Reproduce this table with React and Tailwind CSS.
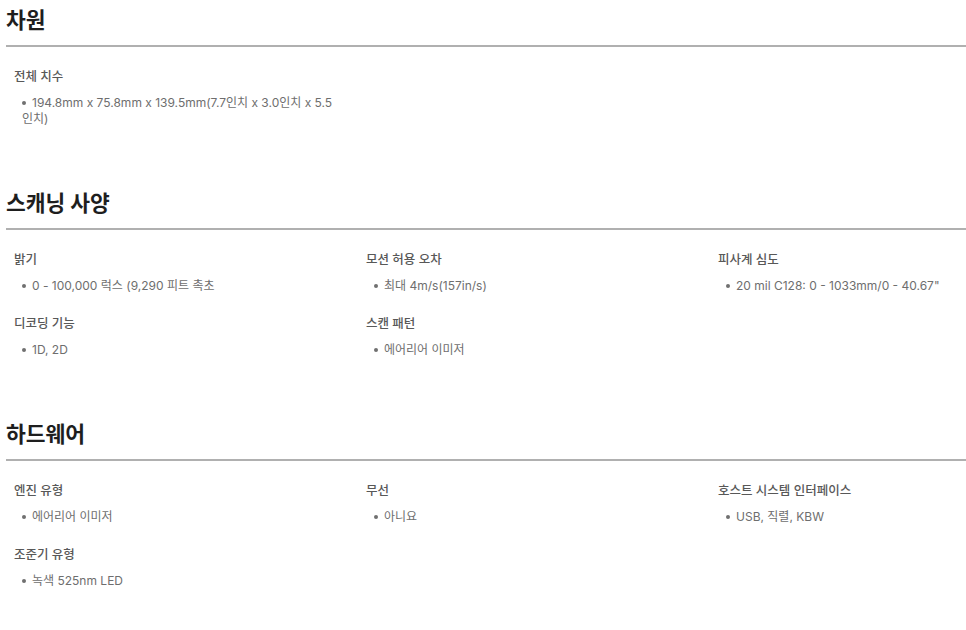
const sections = [
  {
    title: "차원",
    items: [
      { label: "전체 치수", value: "194.8mm x 75.8mm x 139.5mm(7.7인치 x 3.0인치 x 5.5 인치)" },
    ],
  },
  {
    title: "스캐닝 사양",
    items: [
      { label: "밝기", value: "0 - 100,000 럭스 (9,290 피트 촉초" },
      { label: "모션 허용 오차", value: "최대 4m/s(157in/s)" },
      { label: "피사계 심도", value: "20 mil C128: 0 - 1033mm/0 - 40.67\"" },
      { label: "디코딩 기능", value: "1D, 2D" },
      { label: "스캔 패턴", value: "에어리어 이미저" },
    ],
  },
  {
    title: "하드웨어",
    items: [
      { label: "엔진 유형", value: "에어리어 이미저" },
      { label: "무선", value: "아니요" },
      { label: "호스트 시스템 인터페이스", value: "USB, 직렬, KBW" },
      { label: "조준기 유형", value: "녹색 525nm LED" },
    ],
  },
];

function SpecItem({ label, value }) {
  return (
    <div className="pr-[12px]">
      <h4 className="text-[12.5px] leading-5 font-medium text-[#585858]">{label}</h4>
      <ul className="mt-2 pl-2 text-[12px] leading-4 text-[#6e6e6e] break-keep">
        <li>
          <span className="inline-block w-[4px] h-[4px] rounded-full bg-[#707070] mr-[6px] align-middle relative -top-px" />
          {value}
        </li>
      </ul>
    </div>
  );
}

export default function App() {
  return (
    <div
      className="min-h-screen bg-white pl-[6px] pt-[5px] overflow-hidden"
      style={{ fontFamily: 'Inter, "Noto Sans CJK KR", sans-serif' }}
    >
      {sections.map((s) => (
        <section key={s.title} className="mb-[61px]">
          <h2
            className="text-[21.5px] leading-7 font-bold text-[#1e1e1e]"
            style={{ fontFamily: '"Noto Sans CJK KR", sans-serif' }}
          >
            {s.title}
          </h2>
          <div className="mt-3 border-t-2 border-[#b0b0b0]" />
          <div className="grid grid-cols-[352px_352px_352px] gap-y-5 pl-2 pt-5">
            {s.items.map((it) => (
              <SpecItem key={it.label} {...it} />
            ))}
          </div>
        </section>
      ))}
    </div>
  );
}
